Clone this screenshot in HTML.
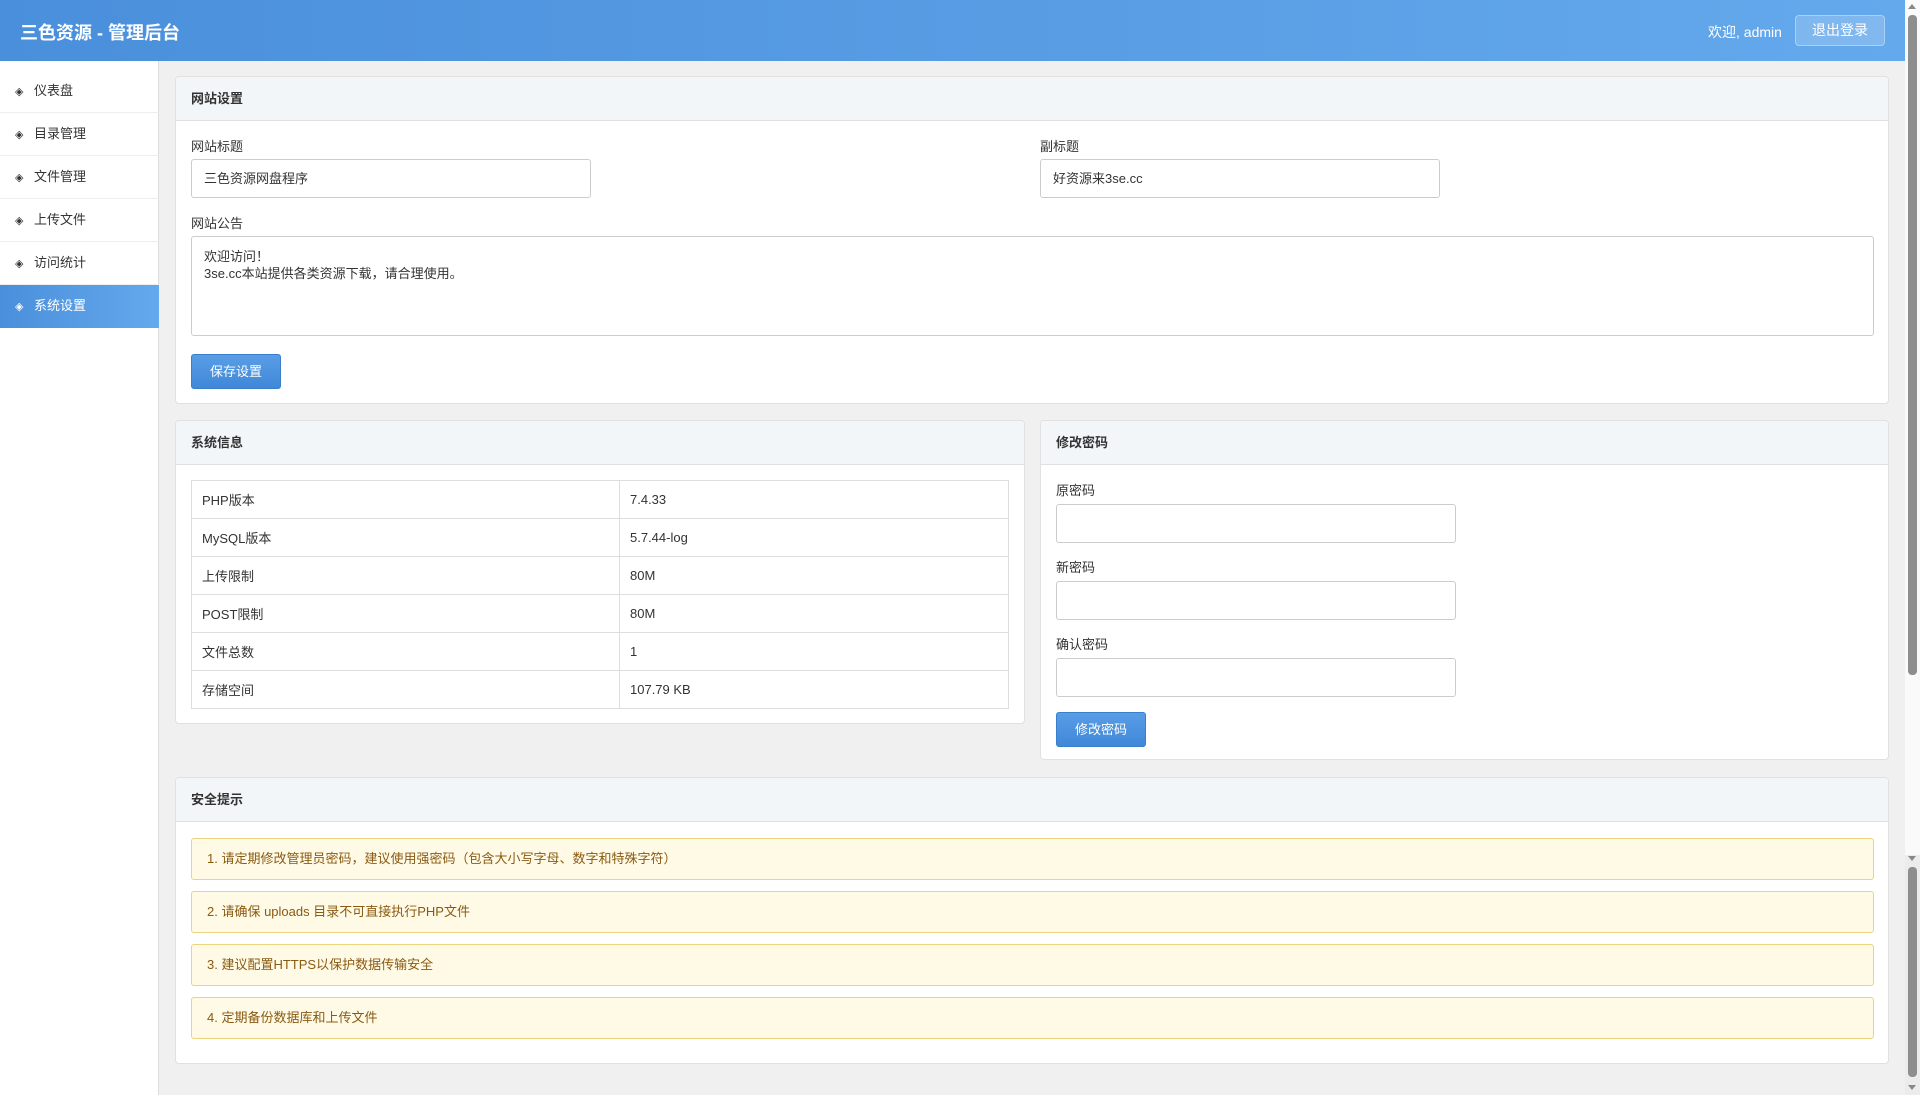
<!DOCTYPE html>
<html><head><meta charset="utf-8"><style>
*{box-sizing:border-box;margin:0;padding:0}
body{width:1920px;height:1095px;overflow:hidden;background:#f0f0f0;font-family:"Liberation Sans","Noto Sans CJK SC",sans-serif;font-size:13px;color:#333;position:relative}
.abs{position:absolute}
.hdr{left:0;top:0;width:1905px;height:61px;background:linear-gradient(90deg,#4a8fdb,#64a9ec)}
.hdr h1{position:absolute;left:20px;top:19px;font-size:18px;color:#fff;font-weight:bold}
.side{left:0;top:61px;width:159px;height:1034px;background:#fff;border-right:1px solid #ddd}
.nav{position:absolute;left:0;width:159px;height:43px;border-bottom:1px solid #eee;line-height:42px;padding-left:15px;color:#333}
.nav.on{background:linear-gradient(90deg,#4a8fdb,#64a9ec);color:#fff;border-bottom:none}
.nav i{font-style:normal;font-size:11px;margin-right:7px;display:inline-block;width:12px}
.card{background:#fff;border:1px solid #e1e1e1;border-radius:4px;overflow:hidden}
.ch{height:44px;background:#f3f6f9;border-bottom:1px solid #e0e0e0;font-weight:bold;line-height:43px;padding-left:15px}
.lbl{position:absolute;font-size:13px;color:#333}
.inp{position:absolute;border:1px solid #ccc;border-radius:3px;background:#fff;padding:0 12px;line-height:37px}
.btn{position:absolute;background:linear-gradient(#5a9de6,#3f88d8);border:1px solid #3a7fcc;border-radius:3px;color:#fff;text-align:center}
table{border-collapse:collapse;position:absolute}
td{border:1px solid #ddd;height:38px;padding-left:10px}
.al{position:absolute;left:15px;width:1683px;height:42px;background:#fffae6;border:1px solid #ecd37d;border-radius:3px;color:#8a5a12;line-height:40px;padding-left:15px}
</style></head><body>
<div class="abs hdr"><h1>三色资源 - 管理后台</h1>
<span class="abs" style="left:1708px;top:22px;color:#fff;font-size:14px">欢迎, admin</span>
<div class="abs" style="left:1795px;top:15px;width:90px;height:31px;border:1px solid rgba(255,255,255,.35);background:rgba(255,255,255,.18);border-radius:4px;color:#fff;text-align:center;line-height:29px;font-size:14px">退出登录</div></div>
<div class="abs side">
<div class="nav" style="top:9px"><i>◈</i>仪表盘</div>
<div class="nav" style="top:52px"><i>◈</i>目录管理</div>
<div class="nav" style="top:95px"><i>◈</i>文件管理</div>
<div class="nav" style="top:138px"><i>◈</i>上传文件</div>
<div class="nav" style="top:181px"><i>◈</i>访问统计</div>
<div class="nav on" style="top:224px;height:43px"><i>◈</i>系统设置</div>
</div>
<div class="abs card" style="left:175px;top:76px;width:1714px;height:328px">
<div class="ch">网站设置</div>
<div class="lbl" style="left:15px;top:59px">网站标题</div>
<div class="inp" style="left:15px;top:82px;width:400px;height:39px">三色资源网盘程序</div>
<div class="lbl" style="left:864px;top:59px">副标题</div>
<div class="inp" style="left:864px;top:82px;width:400px;height:39px">好资源来3se.cc</div>
<div class="lbl" style="left:15px;top:136px">网站公告</div>
<div class="inp" style="left:15px;top:159px;width:1683px;height:100px;line-height:17px;padding-top:11px">欢迎访问！<br>3se.cc本站提供各类资源下载，请合理使用。</div>
<div class="btn" style="left:15px;top:277px;width:90px;height:35px;line-height:33px">保存设置</div>
</div>
<div class="abs card" style="left:175px;top:420px;width:850px;height:304px">
<div class="ch">系统信息</div>
<table style="left:15px;top:59px;width:818px">
<tr><td style="width:428px">PHP版本</td><td>7.4.33</td></tr>
<tr><td>MySQL版本</td><td>5.7.44-log</td></tr>
<tr><td>上传限制</td><td>80M</td></tr>
<tr><td>POST限制</td><td>80M</td></tr>
<tr><td>文件总数</td><td>1</td></tr>
<tr><td>存储空间</td><td>107.79 KB</td></tr>
</table></div>
<div class="abs card" style="left:1040px;top:420px;width:849px;height:340px">
<div class="ch">修改密码</div>
<div class="lbl" style="left:15px;top:59px">原密码</div>
<div class="inp" style="left:15px;top:83px;width:400px;height:39px"></div>
<div class="lbl" style="left:15px;top:136px">新密码</div>
<div class="inp" style="left:15px;top:160px;width:400px;height:39px"></div>
<div class="lbl" style="left:15px;top:213px">确认密码</div>
<div class="inp" style="left:15px;top:237px;width:400px;height:39px"></div>
<div class="btn" style="left:15px;top:291px;width:90px;height:35px;line-height:33px">修改密码</div>
</div>
<div class="abs card" style="left:175px;top:777px;width:1714px;height:287px">
<div class="ch">安全提示</div>
<div class="al" style="top:60px">1. 请定期修改管理员密码，建议使用强密码（包含大小写字母、数字和特殊字符）</div>
<div class="al" style="top:113px">2. 请确保 uploads 目录不可直接执行PHP文件</div>
<div class="al" style="top:166px">3. 建议配置HTTPS以保护数据传输安全</div>
<div class="al" style="top:219px">4. 定期备份数据库和上传文件</div>
</div>
<div class="abs" style="left:1905px;top:0;width:15px;height:855px;background:#fafafa"></div>
<div class="abs" style="left:1905px;top:855px;width:15px;height:240px;background:#ececec"></div>
<div class="abs" style="left:1908px;top:15px;width:9px;height:660px;background:#8e8e8e;border-radius:4px"></div>
<div class="abs" style="left:1908px;top:867px;width:9px;height:210px;background:#8e8e8e;border-radius:4px"></div>
<div class="abs" style="left:1908px;top:4px;width:0;height:0;border-left:4px solid transparent;border-right:4px solid transparent;border-bottom:5px solid #888"></div>
<div class="abs" style="left:1908px;top:856px;width:0;height:0;border-left:4px solid transparent;border-right:4px solid transparent;border-top:5px solid #888"></div>
<div class="abs" style="left:1908px;top:1085px;width:0;height:0;border-left:4px solid transparent;border-right:4px solid transparent;border-top:5px solid #888"></div>
</body></html>
